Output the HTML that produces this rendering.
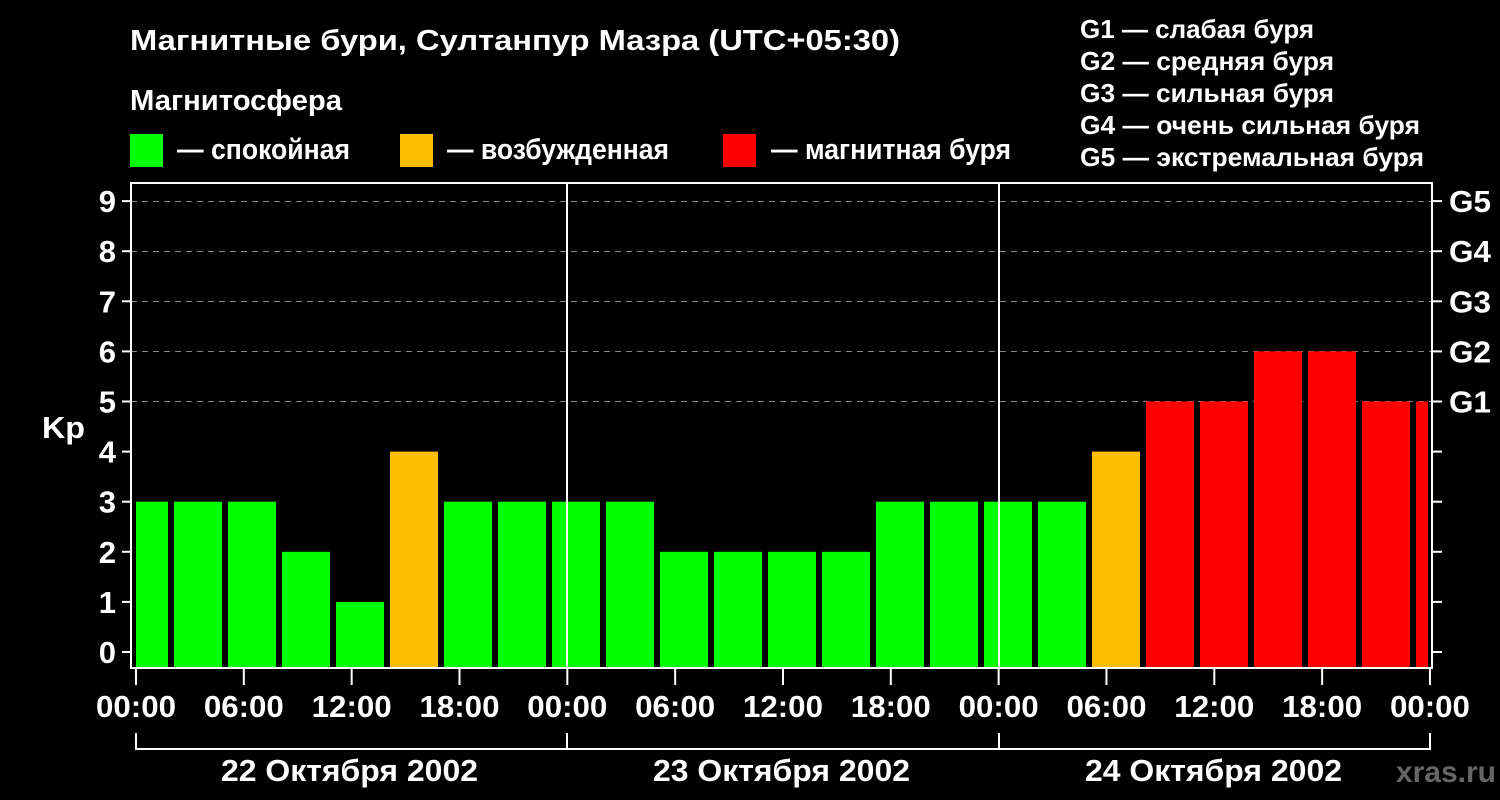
<!DOCTYPE html>
<html><head><meta charset="utf-8"><style>
html,body{margin:0;padding:0;background:#000;width:1500px;height:800px;overflow:hidden}
svg text{font-family:"Liberation Sans",sans-serif;font-weight:bold;fill:#fff}
</style></head><body>
<svg width="1500" height="800" xmlns="http://www.w3.org/2000/svg">
<rect width="1500" height="800" fill="#000"/>
<text x="130" y="50" font-size="29" textLength="770" lengthAdjust="spacingAndGlyphs">Магнитные бури, Султанпур Мазра (UTC+05:30)</text>
<text x="130" y="110" font-size="29" textLength="212" lengthAdjust="spacingAndGlyphs">Магнитосфера</text>
<rect x="130" y="134" width="33" height="33" fill="#00ff00"/>
<text x="177" y="159" font-size="29" textLength="173" lengthAdjust="spacingAndGlyphs">— спокойная</text>
<rect x="400" y="134" width="33" height="33" fill="#ffbf00"/>
<text x="447" y="159" font-size="29" textLength="222" lengthAdjust="spacingAndGlyphs">— возбужденная</text>
<rect x="723" y="134" width="33" height="33" fill="#ff0000"/>
<text x="771" y="159" font-size="29" textLength="240" lengthAdjust="spacingAndGlyphs">— магнитная буря</text>
<g font-size="26">
<text x="1080" y="38">G1 — слабая буря</text>
<text x="1080" y="70" textLength="254" lengthAdjust="spacingAndGlyphs">G2 — средняя буря</text>
<text x="1080" y="102" textLength="254" lengthAdjust="spacingAndGlyphs">G3 — сильная буря</text>
<text x="1080" y="134" textLength="340" lengthAdjust="spacingAndGlyphs">G4 — очень сильная буря</text>
<text x="1080" y="166" textLength="344" lengthAdjust="spacingAndGlyphs">G5 — экстремальная буря</text>
</g>
<g stroke="#888" stroke-width="1" stroke-dasharray="6,5">
<line x1="131" y1="201.5" x2="1432" y2="201.5"/>
<line x1="131" y1="251.5" x2="1432" y2="251.5"/>
<line x1="131" y1="301.5" x2="1432" y2="301.5"/>
<line x1="131" y1="351.5" x2="1432" y2="351.5"/>
<line x1="131" y1="401.5" x2="1432" y2="401.5"/>
</g>
<g id="bars"></g>
<g stroke="#fff" stroke-width="2" fill="none">
<rect x="131" y="183" width="1301" height="485"/>
<line x1="567" y1="183" x2="567" y2="668"/>
<line x1="999" y1="183" x2="999" y2="668"/>
<path d="M136 733V749H1430V733M567 733V749M999 733V749"/>
</g>
<g id="ticks" stroke="#fff" stroke-width="2"></g>
<g font-size="31" text-anchor="end" id="ylab"></g>
<g font-size="31" id="glab"></g>
<g font-size="31" text-anchor="middle" id="xlab"></g>
<text x="42" y="438" font-size="31" textLength="43" lengthAdjust="spacingAndGlyphs">Kp</text>
<text x="221" y="781" font-size="31" textLength="257" lengthAdjust="spacingAndGlyphs">22 Октября 2002</text>
<text x="653" y="781" font-size="31" textLength="257" lengthAdjust="spacingAndGlyphs">23 Октября 2002</text>
<text x="1085" y="781" font-size="31" textLength="257" lengthAdjust="spacingAndGlyphs">24 Октября 2002</text>
<text x="1496" y="782" font-size="30" text-anchor="end" style="fill:#666">xras.ru</text>
</svg>
<script>
var ns="http://www.w3.org/2000/svg";
function el(p,t,a,txt){var e=document.createElementNS(ns,t);for(var k in a)e.setAttribute(k,a[k]);if(txt!=null)e.textContent=txt;document.getElementById(p).appendChild(e);}
var v=[3,3,3,2,1,4,3,3,3,3,2,2,2,2,3,3,3,3,4,5,5,6,6,5,5];
v.forEach(function(k,i){var x0=120+54*i,x1=x0+48;x0=Math.max(x0,136);x1=Math.min(x1,1428);
var y=652-50.1*k;var c=k>=5?"#ff0000":(k==4?"#ffbf00":"#00ff00");
el("bars","rect",{x:x0,y:y,width:x1-x0,height:668-y,fill:c});});
for(var k=0;k<=9;k++){var y=652-50.1*k;
el("ticks","line",{x1:122,y1:y,x2:131,y2:y});el("ticks","line",{x1:1432,y1:y,x2:1442,y2:y});
el("ylab","text",{x:116,y:y+11},""+k);}
["G1","G2","G3","G4","G5"].forEach(function(g,i){el("glab","text",{x:1449,y:652-50.1*(5+i)+11,textLength:42,lengthAdjust:"spacingAndGlyphs"},g);});
var L=["00:00","06:00","12:00","18:00"];
for(var i=0;i<=12;i++){var x=136+i*107.83;el("ticks","line",{x1:x,y1:668,x2:x,y2:685});
el("xlab","text",{x:x,y:717,textLength:80,lengthAdjust:"spacingAndGlyphs"},L[i%4]);}
</script>
</body></html>
